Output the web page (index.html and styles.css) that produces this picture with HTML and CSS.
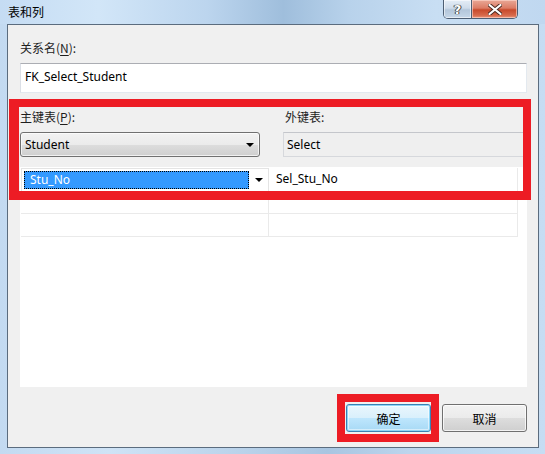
FILE: index.html
```html
<!DOCTYPE html>
<html lang="zh">
<head>
<meta charset="utf-8">
<title>表和列</title>
<link rel="stylesheet" href="styles.css">
</head>
<body>
<div class="window">
  <div class="titlebar">
    <div class="title">表和列</div>
    <div class="caption-buttons">
      <div class="cap-btn help"><span>?</span></div>
      <div class="cap-btn close">
        <svg width="14" height="11" viewBox="0 0 14 11"><path d="M1.5 1 L12.5 10 M12.5 1 L1.5 10" stroke="#4a2a22" stroke-width="4" stroke-linecap="round"/><path d="M1.5 1 L12.5 10 M12.5 1 L1.5 10" stroke="#fff" stroke-width="2.2" stroke-linecap="round"/></svg>
      </div>
    </div>
  </div>
  <div class="frame">
    <div class="client">
      <div class="field-label">关系名(<u>N</u>):</div>
      <div class="textbox">FK_Select_Student</div>

      <div class="two-col labels">
        <div class="field-label">主键表(<u>P</u>):</div>
        <div class="field-label right-label">外键表:</div>
      </div>
      <div class="two-col combos">
        <div class="combo">
          <span>Student</span>
          <span class="arrow"></span>
        </div>
        <div class="readonly-box">Select</div>
      </div>

      <div class="grid">
        <div class="row">
          <div class="cell editor">
            <div class="selected">Stu_No</div>
            <span class="arrow small"></span>
          </div>
          <div class="cell">Sel_Stu_No</div>
        </div>
        <div class="row">
          <div class="cell"></div>
          <div class="cell"></div>
        </div>
        <div class="row">
          <div class="cell"></div>
          <div class="cell"></div>
        </div>
      </div>

      <div class="buttons">
        <div class="btn default">确定</div>
        <div class="btn">取消</div>
      </div>

      <div class="mark mark-main"></div>
      <div class="mark mark-ok"></div>
    </div>
  </div>
</div>
</body>
</html>
```

FILE: styles.css
```css
* { box-sizing: border-box; }

html, body {
  margin: 0;
  padding: 0;
}

body {
  width: 545px;
  height: 454px;
  overflow: hidden;
  font-family: "Noto Sans", "Noto Sans CJK SC", sans-serif;
  font-size: 12px;
  color: #000;
}

.window {
  width: 545px;
  height: 454px;
  display: flex;
  flex-direction: column;
  background: linear-gradient(90deg, #c3daf1 0%, #cfe3f6 20%, #b9d2ea 45%, #a8c5e1 60%, #bcd5ed 75%, #c6ddf3 100%);
}

.titlebar {
  height: 24px;
  display: flex;
  justify-content: space-between;
  align-items: flex-start;
  background: linear-gradient(90deg, #c5dcf3 0%, #d2e6f8 18%, #bcd5ee 38%, #9fbedc 52%, #b8d2eb 64%, #c8def3 80%, #c0d8f0 100%);
}

.title {
  padding: 3px 0 0 8px;
  font-family: "Noto Sans CJK SC", sans-serif;
  font-size: 12px;
  line-height: 17px;
  color: #000;
}

.caption-buttons {
  display: flex;
  margin-right: 27px;
  height: 19px;
  border: 1px solid #4d5e73;
  border-top: none;
  border-radius: 0 0 5px 5px;
  overflow: hidden;
}

.cap-btn {
  height: 18px;
  display: flex;
  align-items: center;
  justify-content: center;
}

.cap-btn.help {
  width: 28px;
  border-right: 1px solid #4d5e73;
  background: linear-gradient(180deg, #e4edf6 0%, #cfdcea 45%, #b3c6da 55%, #c6d7e8 100%);
  box-shadow: inset 0 0 0 1px rgba(255,255,255,0.55);
}

.cap-btn.help span {
  font-family: "DejaVu Sans", sans-serif;
  font-weight: bold;
  font-size: 13px;
  color: #fff;
  text-shadow: 0 0 1px #333, 0 0 1px #333, 1px 0 0 #555, -1px 0 0 #555;
  line-height: 13px;
}

.cap-btn.close {
  width: 45px;
  background: linear-gradient(180deg, #e9a897 0%, #dc7c65 45%, #c84a2c 55%, #d7694b 85%, #e9947a 100%);
  box-shadow: inset 0 0 0 1px rgba(255,220,210,0.6);
}

.frame {
  flex: 1;
  display: flex;
  padding: 0 6px 6px 7px;
}

.client {
  position: relative;
  flex: 1;
  display: flex;
  flex-direction: column;
  background: #f0f0f0;
  border: 1px solid #5b6c7e;
  padding: 15px 11px 15px 12px;
}

.field-label {
  height: 16px;
  line-height: 16px;
  font-family: "Noto Sans CJK SC", sans-serif;
  font-size: 12px;
  color: #1e1e1e;
}

.field-label u {
  text-underline-offset: 2px;
}

.textbox {
  margin-top: 7px;
  height: 30px;
  background: #fff;
  border: 1px solid #e3e9ef;
  border-top-color: #abadb3;
  border-left-color: #dbdfe6;
  padding: 0 0 0 4px;
  line-height: 26px;
  color: #000;
}

.two-col {
  display: grid;
  grid-template-columns: 240px 242px;
  column-gap: 23px;
}

.labels {
  margin-top: 16px;
}

.right-label {
  padding-left: 2px;
}

.combos {
  margin-top: 7px;
  height: 25px;
}

.combo {
  position: relative;
  height: 25px;
  border: 1px solid #707070;
  border-radius: 3px;
  background: linear-gradient(180deg, #f2f2f2 0%, #ebebeb 50%, #dddddd 51%, #cfcfcf 100%);
  box-shadow: inset 0 0 0 1px rgba(255,255,255,0.7);
  padding-left: 4px;
  line-height: 23px;
  display: flex;
  justify-content: space-between;
  align-items: center;
  padding-right: 5px;
}

.arrow {
  width: 0;
  height: 0;
  border-left: 4px solid transparent;
  border-right: 4px solid transparent;
  border-top: 4px solid #000;
}

.readonly-box {
  height: 25px;
  border: 1px solid #d6d8dc;
  border-top-color: #c4c6cb;
  background: #efefef;
  padding-left: 3px;
  line-height: 23px;
}

.grid {
  margin-top: 10px;
  height: 220px;
  background: #fff;
  padding: 1px 0 0 1px;
}

.row {
  display: grid;
  grid-template-columns: 248px 249px;
  height: 23px;
}

.cell {
  border-right: 1px solid #eaeaea;
  border-bottom: 1px solid #eaeaea;
  padding-left: 7px;
  line-height: 22px;
}

.cell.editor {
  display: flex;
  align-items: center;
  padding: 2px 5px 2px 2px;
  border: 1px solid #e4e4e4;
  gap: 3px;
}

.selected {
  flex: 1;
  height: 18px;
  background: #3399ff;
  color: #fff;
  border: 1px dotted #000;
  line-height: 16px;
  padding-left: 5px;
}

.arrow.small {
  margin-left: 3px;
  border-left-width: 4px;
  border-right-width: 4px;
  border-top-width: 4px;
}

.buttons {
  margin-top: auto;
  display: flex;
  justify-content: flex-end;
  gap: 11px;
  padding-right: 0;
}

.btn {
  width: 85px;
  height: 28px;
  border: 1px solid #707070;
  border-radius: 3px;
  background: linear-gradient(180deg, #f2f2f2 0%, #ebebeb 50%, #dddddd 51%, #cfcfcf 100%);
  box-shadow: inset 0 0 0 1px rgba(255,255,255,0.75);
  display: flex;
  align-items: center;
  justify-content: center;
  font-family: "Noto Sans CJK SC", sans-serif;
  font-size: 12px;
  color: #000;
}

.btn.default {
  border-color: #3c7fb1;
  background: linear-gradient(180deg, #eaf6fd 0%, #d9f0fc 50%, #bee6fd 51%, #a7d9f5 100%);
  box-shadow: inset 0 0 0 1px #8ed5f7, inset 0 0 0 2px rgba(255,255,255,0.5);
}

.mark {
  position: absolute;
  border: 8px solid #ed1c24;
  pointer-events: none;
}

.mark-main {
  left: 1px;
  top: 74px;
  width: 522px;
  height: 101px;
  border-left-width: 10px;
  border-bottom-width: 9px;
}

.mark-ok {
  left: 329px;
  top: 369px;
  width: 102px;
  height: 48px;
}
```
